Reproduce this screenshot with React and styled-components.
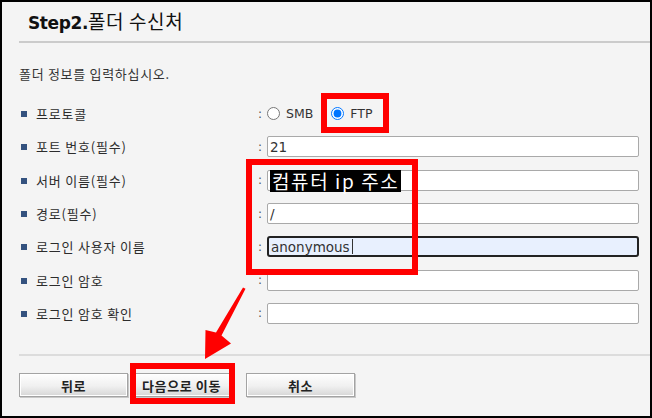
import styled, { createGlobalStyle } from "styled-components";

const GlobalStyle = createGlobalStyle`
  html, body {
    margin: 0;
    padding: 0;
    background: #f4f4f4;
  }
  body {
    font-family: "DejaVu Sans", "Noto Sans CJK KR", sans-serif;
  }
`;

const Frame = styled.div`
  position: relative;
  width: 652px;
  height: 418px;
  box-sizing: border-box;
  border: 2px solid #000;
  background: #f4f4f4;
  overflow: hidden;
  display: flex;
  flex-direction: column;
`;

const Header = styled.header`
  height: 41px;
  margin-left: 17px;
  padding-left: 9px;
  border-bottom: 2px solid #cbcbcb;
  display: flex;
  align-items: center;
  padding-bottom: 2px;
  box-sizing: border-box;
`;

const Title = styled.h1`
  margin: 0;
  font-size: 19px;
  font-weight: normal;
  letter-spacing: 0.6px;
  color: #111;
  font-family: "Noto Sans CJK KR", sans-serif;
  b {
    font-family: "DejaVu Sans", sans-serif;
    font-size: 17px;
    font-weight: bold;
    letter-spacing: -0.4px;
  }
`;

const Body = styled.section`
  padding: 0 11px 0 17px;
`;

const Intro = styled.p`
  margin: 0;
  height: 54px;
  display: flex;
  align-items: center;
  padding-top: 6px;
  box-sizing: border-box;
  font-family: "Noto Sans CJK KR", sans-serif;
  font-size: 13px;
  letter-spacing: 0.7px;
  color: #333;
`;

const Form = styled.div`
  display: grid;
  grid-template-columns: 238px 10px 1fr;
  grid-auto-rows: 33.3px;
  align-items: center;
`;

const Label = styled.div`
  display: flex;
  align-items: center;
  gap: 9px;
  padding-left: 2px;
  font-family: "Noto Sans CJK KR", sans-serif;
  font-size: 13px;
  letter-spacing: 0.8px;
  color: #2c2c2c;
  &::before {
    content: "";
    flex: none;
    width: 6px;
    height: 6px;
    background: #34527f;
    margin-top: 1px;
  }
`;

const Colon = styled.span`
  padding-left: 1px;
  font-size: 12px;
  color: #555;
`;

const Radios = styled.div`
  display: flex;
  align-items: center;
  gap: 18px;
`;

const RadioLabel = styled.label`
  display: flex;
  align-items: center;
  gap: 6px;
  font-size: 12.5px;
  color: #333;
  input {
    width: 13px;
    height: 13px;
    margin: 0;
  }
`;

const Field = styled.div`
  height: 21px;
  box-sizing: border-box;
  display: flex;
  align-items: center;
  padding: 0 2px;
  border: ${p => (p.$focused ? "2px solid #222" : "1px solid #a9a9a9")};
  border-radius: ${p => (p.$focused ? "3px" : "2px")};
  background: ${p => (p.$focused ? "#e8f0fe" : "#fff")};
  font-size: 13.5px;
  color: #333;
  white-space: nowrap;
`;

const Highlight = styled.span`
  background: #000;
  color: #fff;
  font-family: "Noto Sans CJK KR", sans-serif;
  font-size: 19px;
  letter-spacing: 1.6px;
  line-height: 22px;
  padding: 0 2px 0 2px;
  margin-top: 2px;
`;

const Caret = styled.span`
  align-self: stretch;
  width: 1px;
  background: #333;
  margin: 1px 0 1px 2px;
`;

const Footer = styled.footer`
  margin: 24px 0 0 17px;
  padding-top: 17px;
  border-top: 2px solid #dcdcdc;
  display: flex;
`;

const Button = styled.button`
  width: ${p => p.$w}px;
  margin-right: ${p => p.$gap}px;
  height: 24px;
  padding: 0;
  border: 1px solid #a3a3a3;
  box-shadow: inset 0 0 0 1px #fff, 1px 1px 0 #c9c9c9;
  background: linear-gradient(#fefefe, #f0f0f0 55%, #d6d6d6);
  font-family: "Noto Sans CJK KR", sans-serif;
  font-size: 13px;
  font-weight: bold;
  letter-spacing: 0.6px;
  color: #222;
`;

const Callout = styled.div`
  position: absolute;
  left: ${p => p.$x - 2}px;
  top: ${p => p.$y - 2}px;
  width: ${p => p.$w}px;
  height: ${p => p.$h}px;
  box-sizing: border-box;
  border: 6px solid #ff0000;
  pointer-events: none;
`;

const Arrow = styled.svg`
  position: absolute;
  left: 193px;
  top: 278px;
  pointer-events: none;
`;

const rows = [
  { label: "포트 번호(필수)", value: "21" },
  { label: "서버 이름(필수)", highlight: "컴퓨터 ip 주소" },
  { label: "경로(필수)", value: "/" },
  { label: "로그인 사용자 이름", value: "anonymous", focused: true },
  { label: "로그인 암호", value: "" },
  { label: "로그인 암호 확인", value: "" },
];

export default function App() {
  return (
    <>
      <GlobalStyle />
      <Frame>
        <Header>
          <Title>
            <b>Step2.</b>폴더 수신처
          </Title>
        </Header>

        <Body>
          <Intro>폴더 정보를 입력하십시오.</Intro>
          <Form>
            <Label>프로토콜</Label>
            <Colon>:</Colon>
            <Radios>
              <RadioLabel>
                <input type="radio" name="proto" />
                SMB
              </RadioLabel>
              <RadioLabel>
                <input type="radio" name="proto" defaultChecked />
                FTP
              </RadioLabel>
            </Radios>

            {rows.map(row => (
              <Row key={row.label} row={row} />
            ))}
          </Form>
        </Body>

        <Footer>
          <Button $w={109} $gap={3}>뒤로</Button>
          <Button $w={101} $gap={14}>다음으로 이동</Button>
          <Button $w={109} $gap={0}>취소</Button>
        </Footer>

        <Callout $x={321} $y={93} $w={68} $h={40} />
        <Callout $x={246} $y={159} $w={172} $h={116} />
        <Callout $x={130} $y={363} $w={105} $h={41} />

        <Arrow width="56" height="84" viewBox="193 278 56 84">
          <polygon
            points="203,357 203.5,328 214,330.5 241,285.5 243.5,286.8 219.5,333.5 229,341.5"
            fill="#ff0000"
          />
        </Arrow>
      </Frame>
    </>
  );
}

function Row({ row }) {
  return (
    <>
      <Label>{row.label}</Label>
      <Colon>:</Colon>
      <Field $focused={row.focused}>
        {row.highlight ? <Highlight>{row.highlight}</Highlight> : row.value}
        {row.focused && <Caret />}
      </Field>
    </>
  );
}
